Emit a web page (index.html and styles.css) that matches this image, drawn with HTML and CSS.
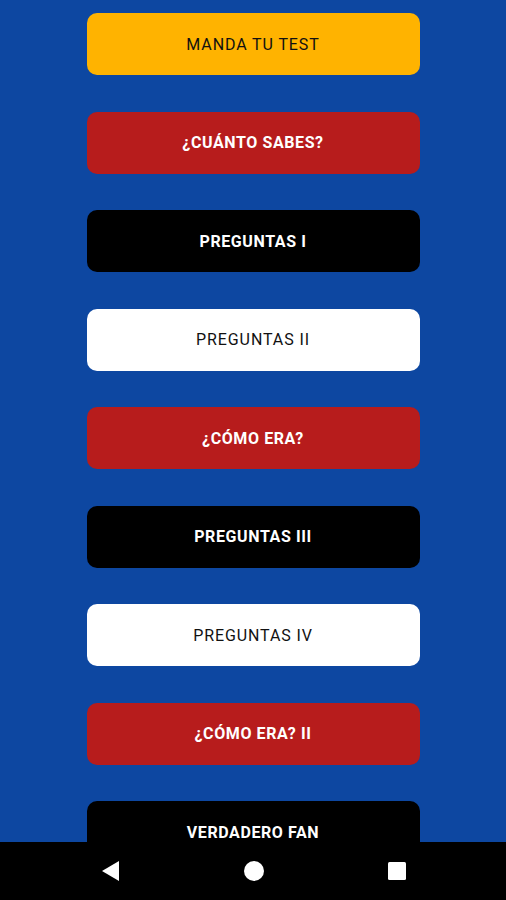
FILE: index.html
```html
<!DOCTYPE html>
<html lang="es">
<head>
	<meta charset="utf-8">
	<title>Test</title>
	<link rel="stylesheet" href="styles.css">
</head>
<body>
	<div class="screen">
		<div class="menu">
			<div class="btn yellow">MANDA TU TEST</div>
			<div class="btn red">¿CUÁNTO SABES?</div>
			<div class="btn black">PREGUNTAS I</div>
			<div class="btn white">PREGUNTAS II</div>
			<div class="btn red">¿CÓMO ERA?</div>
			<div class="btn black">PREGUNTAS III</div>
			<div class="btn white">PREGUNTAS IV</div>
			<div class="btn red">¿CÓMO ERA? II</div>
			<div class="btn black">VERDADERO FAN</div>
		</div>
		<div class="navbar">
			<svg class="nav-ico" width="20" height="20" viewBox="0 0 20 20"><polygon points="18,0 18,20 1,10" fill="#fff"/></svg>
			<svg class="nav-ico" width="20" height="20" viewBox="0 0 20 20"><circle cx="10" cy="10" r="10" fill="#fff"/></svg>
			<svg class="nav-ico" width="20" height="20" viewBox="0 0 20 20"><rect x="1" y="1" width="18" height="18" rx="1.5" fill="#fff"/></svg>
		</div>
	</div>
</body>
</html>
```

FILE: styles.css
```css
* {
	margin: 0;
	padding: 0;
	box-sizing: border-box;
}

body {
	background: #0d47a1;
	font-family: Roboto, "Liberation Sans", sans-serif;
}

.screen {
	height: 900px;
	display: flex;
	flex-direction: column;
	overflow: hidden;
}

.menu {
	flex: 1;
	overflow: hidden;
	display: flex;
	flex-direction: column;
	align-items: center;
	gap: 36.5px;
	padding-top: 13px;
}

.btn {
	flex: none;
	width: 333px;
	height: 62px;
	border-radius: 10px;
	display: flex;
	align-items: center;
	justify-content: center;
	font-size: 16px;
	font-weight: 400;
	letter-spacing: 0.9px;
	color: #111;
}

.yellow {
	background: #ffb300;
}

.white {
	background: #fff;
}

.red {
	background: #b71c1c;
	color: #fff;
	font-weight: 700;
	letter-spacing: 0.6px;
}

.black {
	background: #000;
	color: #fff;
	font-weight: 700;
	letter-spacing: 0.6px;
}

.navbar {
	flex: none;
	height: 58px;
	background: #000;
	display: flex;
	align-items: center;
	justify-content: space-between;
	padding: 0 99px 0 101px;
}
```
